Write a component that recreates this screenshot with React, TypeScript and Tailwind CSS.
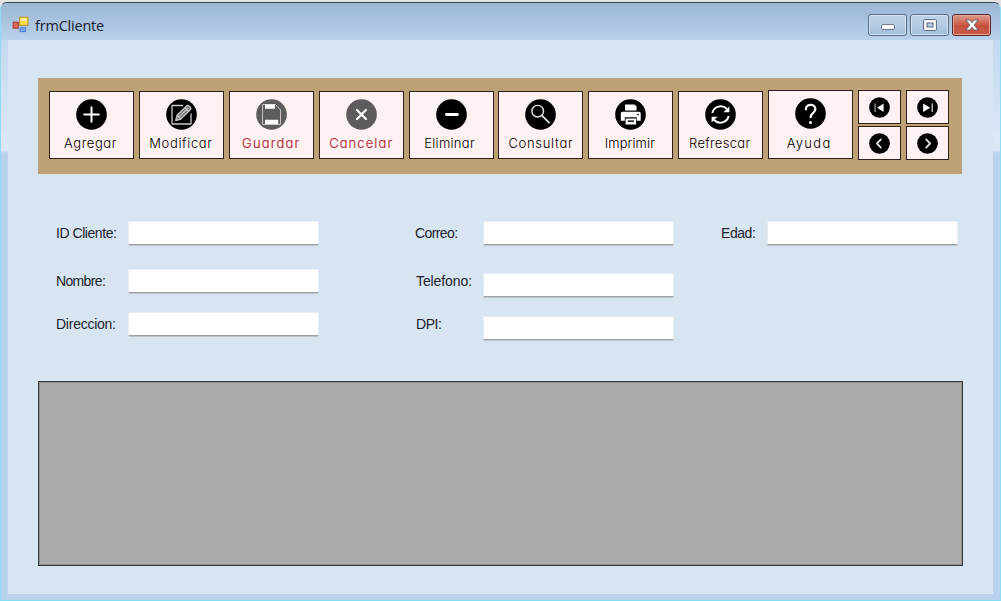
import type { ReactNode } from "react";

function Disc({ children, muted = false, small = false }: { children: ReactNode; muted?: boolean; small?: boolean }) {
  return (
    <svg
      viewBox="0 0 31 31"
      className={small ? "h-[21px] w-[21px] shrink-0" : "h-[31px] w-[31px] shrink-0"}
      fill="none"
      stroke="#fff"
      strokeLinecap="round"
      strokeLinejoin="round"
    >
      <circle cx="15.5" cy="15.5" r="15.3" fill={muted ? "#5d5b5b" : "#000"} stroke="none" />
      {children}
    </svg>
  );
}

type Tool = { label: string; text: string; icon: ReactNode; muted?: boolean };

const tools: Tool[] = [
  {
    label: "Agregar",
    text: "tracking-[0.6px] -ml-[2px]",
    icon: <path d="M15.5 8.2v14.6M8.2 15.5h14.6" strokeWidth="2" />,
  },
  {
    label: "Modificar",
    text: "tracking-[0.65px] -ml-px",
    icon: (
      <g stroke="#c9c9c9" strokeWidth="1.3">
        <path d="M17 6.5H6v18.5h19V14.5" strokeLinecap="butt" />
        <path d="M9.7 21.5l1.4-5.2L20.8 6.8a1.5 1.5 0 0 1 2 0l1.7 1.7a1.5 1.5 0 0 1 0 2L14.8 20.1z" fill="#777" />
        <path d="M11.2 16.4l3.5 3.5M12.8 18.2l9-8.8M19 8.6l3.7 3.7" strokeWidth="1.1" />
      </g>
    ),
  },
  {
    label: "Guardar",
    text: "tracking-[1.2px] text-[#b42b3a] [-webkit-text-stroke:0.2px_#b42b3a]",
    muted: true,
    icon: (
      <>
        <path d="M7 5.5h12.5l5 5.5v14.5H7z" stroke="#c8c6c6" strokeWidth="1" />
        <path d="M9 5.5h10v4.2H9zM9 20.7h13.2v4.4H9z" fill="#fff" stroke="none" />
      </>
    ),
  },
  {
    label: "Cancelar",
    text: "tracking-[1.1px] text-[#b42b3a] [-webkit-text-stroke:0.2px_#b42b3a]",
    muted: true,
    icon: <path d="M11 11l9 9M20 11l-9 9" strokeWidth="2.2" />,
  },
  {
    label: "Eliminar",
    text: "tracking-[0.3px] -ml-[3px]",
    icon: <path d="M10.4 15.5h11" strokeWidth="2.8" />,
  },
  {
    label: "Consultar",
    text: "tracking-[0.7px]",
    icon: (
      <g stroke="#e4e4e4" strokeWidth="1.4">
        <circle cx="12.7" cy="12.2" r="5.8" />
        <path d="M17 16.7l7 7" strokeWidth="1.8" />
      </g>
    ),
  },
  {
    label: "Imprimir",
    text: "tracking-[0.1px] -ml-[2px]",
    icon: (
      <g fill="#fff" stroke="none">
        <path d="M10 5.5h9.5l2 2v4H10z" />
        <path d="M7.3 12.7h16.9a1.5 1.5 0 0 1 1.5 1.5v7.5h-4v-3.4H9.8v3.4h-4v-7.5a1.5 1.5 0 0 1 1.5-1.5z" />
        <path d="M10.6 19.5h10.5v6H10.6z" />
        <path d="M12.7 21.3h6.2v1.8h-6.2z" fill="#333" />
        <circle cx="23" cy="15.6" r="0.9" fill="#000" />
      </g>
    ),
  },
  {
    label: "Refrescar",
    text: "tracking-[0.3px] -ml-[2px]",
    icon: (
      <>
        <path d="M7.3 14a8.6 8.6 0 0 1 14.6-4M23.7 17a8.6 8.6 0 0 1-14.6 4" strokeWidth="2" strokeLinecap="butt" />
        <path d="M24.4 7.4v5.8h-6zM6.6 23.6v-5.8h6z" fill="#fff" stroke="none" />
      </>
    ),
  },
  {
    label: "Ayuda",
    text: "tracking-[1.3px] -ml-[3px]",
    icon: (
      <>
        <path d="M10.9 11.3c0-6 9.5-5.6 9.5-.3 0 4-4.8 4-4.8 8.2" strokeWidth="2.2" />
        <circle cx="15.5" cy="24.6" r="1.5" fill="#fff" stroke="none" />
      </>
    ),
  },
];

function ToolButton({ tool, tall = false }: { tool: Tool; tall?: boolean }) {
  return (
    <button
      className={`flex w-[85px] shrink-0 flex-col items-center border-[1.5px] border-[#30201c] bg-[#fef1f1] ${
        tall ? "h-[69px] pt-[7px]" : "mt-px h-[68px] pt-[7px]"
      }`}
    >
      <Disc muted={tool.muted}>{tool.icon}</Disc>
      <span
        className={`whitespace-nowrap font-[Inter,sans-serif] text-[13px] leading-[18px] font-light [font-feature-settings:'cv11'] ${
          tall ? "mt-[5px]" : "mt-1"
        } ${tool.text}`}
      >
        {tool.label}
      </span>
    </button>
  );
}

const nav: { name: string; icon: ReactNode }[] = [
  {
    name: "first",
    icon: (
      <>
        <path d="M9 10v11.5" strokeWidth="1.6" stroke="#bbb" />
        <path d="M21.5 9.5v12.5L12 15.7z" fill="#fff" stroke="none" />
      </>
    ),
  },
  {
    name: "last",
    icon: (
      <>
        <path d="M22.5 10v11.5" strokeWidth="1.8" stroke="#ddd" />
        <path d="M9 9.5v12.5l10.5-6.3z" fill="#fff" stroke="none" />
      </>
    ),
  },
  { name: "previous", icon: <path d="M17.5 9.5l-5.8 6 5.8 6" strokeWidth="2.7" stroke="#ddd" /> },
  { name: "next", icon: <path d="M13.5 9.5l5.8 6-5.8 6" strokeWidth="2.7" stroke="#ddd" /> },
];

function Field({ label, labelClass, boxClass = "" }: { label: string; labelClass: string; boxClass?: string }) {
  return (
    <div className="flex h-[24px] items-start">
      <label
        className={`shrink-0 whitespace-nowrap font-['Liberation_Sans',sans-serif] text-[14px] leading-[24px] text-[#20242b] ${labelClass}`}
      >
        {label}
      </label>
      <input
        className={`h-[24px] w-[191px] shrink-0 rounded-[2px] border border-[#e6edf5] border-b-[#9da2a8] bg-white shadow-[0_1px_0_#bcc3cb] outline-none ${boxClass}`}
      />
    </div>
  );
}

const frameButton =
  "flex h-[22px] w-[39px] items-center justify-center rounded-[3px] border border-[#596d87] inset-shadow-[0_0_0_1px_#d7e4f2]";

export default function App() {
  return (
    <div className="h-[601px] w-[1001px] overflow-hidden bg-[#e3e3e3] pt-[2px]">
      <div className="flex h-[599px] flex-col rounded-t-[7px] border-x border-t-[1.5px] border-b border-x-[#8fdcf2] border-t-[#3c4650] border-b-[#82dcf2] bg-[#b9d1ec]">
        <header className="flex h-[37px] shrink-0 items-start justify-between rounded-t-[6px] bg-linear-to-b from-[#9bb7d4] to-[#b9d1ea] pr-[9px] pl-[11px]">
          <div className="flex items-start pt-[13px]">
            <svg viewBox="0 0 18 17" className="h-[17px] w-[18px]">
              <rect x="1.2" y="6.2" width="5" height="6" fill="#e26b5c" stroke="#a92f28" />
              <rect x="7.7" y="1.2" width="8.2" height="8.2" fill="#fbd94d" stroke="#c39420" />
              <path d="M8.5 2h6.5v3H8.5z" fill="#fdeb95" />
              <rect x="8" y="11.8" width="5.6" height="3.8" fill="#70a4ee" stroke="#4f80d3" />
            </svg>
            <h1 className="mt-px ml-[5px] font-['Open_Sans',sans-serif] text-[14.5px] leading-[18px] tracking-[-0.2px] text-[#172033]">
              frmCliente
            </h1>
          </div>
          <div className="flex gap-[3px] pt-[11px]">
            <button className={`${frameButton} bg-linear-to-b from-[#bdd2e8] via-[#b5cce4] via-50% to-[#a2bcd8]`}>
              <svg viewBox="0 0 14 6" className="mt-[3px] h-[6px] w-[14px]">
                <rect x="0.6" y="0.6" width="12.8" height="4.8" rx="1" fill="#fff" stroke="#677386" />
              </svg>
            </button>
            <button className={`${frameButton} bg-linear-to-b from-[#bdd2e8] via-[#b5cce4] via-50% to-[#a2bcd8]`}>
              <svg viewBox="0 0 14 12" className="-mt-px h-[12px] w-[14px]">
                <rect x="0.6" y="0.6" width="12.8" height="10.8" rx="1" fill="#fff" stroke="#59667a" />
                <rect x="4" y="4" width="6" height="4" fill="#b8cde4" stroke="#59667a" />
              </svg>
            </button>
            <button className="flex h-[22px] w-[39px] items-center justify-center rounded-[3px] border border-[#5d2627] bg-linear-to-b from-[#dd9a8b] via-[#c5503f] via-55% to-[#cb5a45] inset-shadow-[0_0_0_1px_#e5a99c]">
              <svg viewBox="0 0 14 12" className="-mt-px h-[12px] w-[14px]">
                <path
                  d="M1 1h3.8L7 3.7 9.2 1H13L9.2 6l3.8 5H9.2L7 8.3 4.8 11H1l3.8-5z"
                  fill="#fff"
                  stroke="#626574"
                  strokeWidth="0.9"
                />
              </svg>
            </button>
          </div>
        </header>

        <div className="h-[561px] bg-linear-to-b from-[#c3d9f0] from-0% via-[#dce9f7] via-[110px] to-[#b9d1ec] to-[113px] px-[7px] pb-[6px]">
          <main className="h-[554px] bg-[#d7e4f2] px-[30px] pt-[38px]">
            <div className="flex h-[96px] w-[924px] items-start gap-[4.9px] bg-[#bba173] pt-[12px] pl-[11px]">
              {tools.map((tool) => (
                <ToolButton key={tool.label} tool={tool} tall={tool.label === "Ayuda"} />
              ))}
              <div className="grid grid-cols-[43px_43px] grid-rows-[34px_34px] gap-x-[5px] gap-y-[2px]">
                {nav.map((item) => (
                  <button
                    key={item.name}
                    className="flex items-center justify-center border-[1.5px] border-[#30201c] bg-[#fef1f1]"
                  >
                    <Disc small>{item.icon}</Disc>
                  </button>
                ))}
              </div>
            </div>

            <form className="flex h-[207px] pt-[47px] pl-[18px]">
              <div className="flex w-[359px] flex-col">
                <Field label="ID Cliente:" labelClass="w-[72px] tracking-[-0.45px]" />
                <div className="mt-[24px]">
                  <Field label="Nombre:" labelClass="w-[72px] tracking-[-0.65px]" />
                </div>
                <div className="mt-[19px]">
                  <Field label="Direccion:" labelClass="w-[72px] tracking-[-0.25px]" />
                </div>
              </div>
              <div className="flex w-[306px] flex-col">
                <Field label="Correo:" labelClass="w-[68px] tracking-[-0.6px]" />
                <div className="mt-[24px]">
                  <Field label="Telefono:" labelClass="w-[68px] pl-px tracking-[-0.1px]" boxClass="mt-[4px]" />
                </div>
                <div className="mt-[19px]">
                  <Field label="DPI:" labelClass="w-[68px] pl-px tracking-[-0.45px]" boxClass="mt-[4px]" />
                </div>
              </div>
              <Field label="Edad:" labelClass="w-[46px] tracking-[-0.45px]" />
            </form>

            <div className="h-[185px] w-[925px] border-[1.5px] border-[#35383b] bg-[#ababab] inset-shadow-[0_0_0_1px_#8d8f90]" />
          </main>
        </div>
      </div>
    </div>
  );
}
